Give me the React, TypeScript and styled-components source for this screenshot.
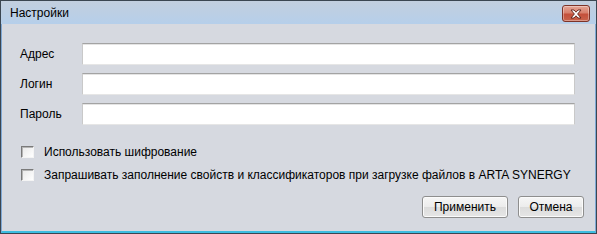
import { createGlobalStyle, styled } from "styled-components";

const GlobalStyle = createGlobalStyle`
  html, body {
    margin: 0;
    padding: 0;
    background: #d6d9e0;
  }
  * {
    box-sizing: border-box;
  }
`;

const Window = styled.div`
  width: 597px;
  height: 234px;
  display: flex;
  flex-direction: column;
  border: 1px solid #3b4651;
  font-family: "Liberation Sans", Arial, sans-serif;
  font-size: 12px;
  color: #000;
`;

const TitleBar = styled.header`
  height: 23px;
  flex-shrink: 0;
  display: flex;
  align-items: center;
  justify-content: space-between;
  padding: 0 6px 0 9px;
  background: linear-gradient(to bottom, #c2cfdf 0%, #bccfe4 50%, #b6cfea 100%);
`;

const Title = styled.span`
  font-size: 12px;
  color: #000;
`;

const CloseButton = styled.button`
  width: 28px;
  height: 17px;
  margin-top: 2px;
  padding: 0;
  display: flex;
  align-items: center;
  justify-content: center;
  border: 1px solid #7d3328;
  border-radius: 3px;
  background: linear-gradient(to bottom, #e5a596 0%, #d8806c 45%, #c4503b 55%, #c9634c 100%);
  box-shadow: inset 0 0 0 1px rgba(255, 255, 255, 0.35);
`;

const Body = styled.main`
  flex: 1;
  display: flex;
  flex-direction: column;
  padding: 19px 20px 0 18px;
  background: #d6d9e0;
  border-left: 1px solid #7fa9d6;
  border-right: 1px solid #7fa9d6;
  border-bottom: 2px solid #3cbde0;
`;

const Fields = styled.div`
  display: grid;
  grid-template-columns: 62px 1fr;
  row-gap: 8px;
  align-items: center;
`;

const Label = styled.label`
  font-size: 12px;
`;

const Input = styled.input`
  height: 22px;
  width: 100%;
  padding: 0 4px;
  margin: 0;
  background: #fff;
  border: 1px solid #c9c9c9;
  border-top-color: #a3a3a3;
  border-bottom-color: #e6e6e6;
  box-shadow: inset 0 1px 0 #e4e4e4;
  font-family: inherit;
  font-size: 12px;
  outline: none;
`;

const Options = styled.div`
  display: flex;
  flex-direction: column;
  margin-top: 15px;
`;

const CheckRow = styled.label`
  height: 23px;
  display: flex;
  align-items: center;
  gap: 10px;
  padding-left: 1px;
  font-size: 12px;
`;

const CheckBox = styled.span`
  width: 13px;
  height: 12px;
  flex-shrink: 0;
  border: 1px solid #f4f4f4;
  border-top-color: #7a7a7a;
  border-left-color: #7a7a7a;
  background: linear-gradient(135deg, #e8e8e8 0%, #ffffff 100%);
  box-shadow: inset 1px 1px 0 #b5b5b5;
`;

const Actions = styled.div`
  display: flex;
  justify-content: flex-end;
  gap: 10px;
  margin-top: 10px;
  margin-right: -9px;
`;

const Button = styled.button<{ $width: number }>`
  width: ${(p) => p.$width}px;
  height: 22px;
  padding: 0;
  border: 1px solid #8e8e8e;
  border-radius: 3px;
  background: linear-gradient(to bottom, #f6f6f6 0%, #ececec 50%, #dcdcdc 51%, #e6e6e6 100%);
  box-shadow: inset 0 0 0 1px #fbfbfb;
  font-family: inherit;
  font-size: 12px;
  color: #000;
`;

function CloseIcon() {
  return (
    <svg width="14" height="10" viewBox="0 0 14 10">
      <path
        d="M2 1 L5 1 L7 3.2 L9 1 L12 1 L8.6 5 L12 9 L9 9 L7 6.8 L5 9 L2 9 L5.4 5 Z"
        fill="#fff"
        stroke="#5a2019"
        strokeWidth="0.9"
        strokeLinejoin="round"
      />
    </svg>
  );
}

export default function App() {
  return (
    <>
      <GlobalStyle />
      <Window>
        <TitleBar>
          <Title>Настройки</Title>
          <CloseButton aria-label="Закрыть">
            <CloseIcon />
          </CloseButton>
        </TitleBar>
        <Body>
          <Fields>
            <Label>Адрес</Label>
            <Input />
            <Label>Логин</Label>
            <Input />
            <Label>Пароль</Label>
            <Input type="password" />
          </Fields>
          <Options>
            <CheckRow>
              <CheckBox />
              Использовать шифрование
            </CheckRow>
            <CheckRow>
              <CheckBox />
              Запрашивать заполнение свойств и классификаторов при загрузке файлов в ARTA SYNERGY
            </CheckRow>
          </Options>
          <Actions>
            <Button $width={86}>Применить</Button>
            <Button $width={66}>Отмена</Button>
          </Actions>
        </Body>
      </Window>
    </>
  );
}
